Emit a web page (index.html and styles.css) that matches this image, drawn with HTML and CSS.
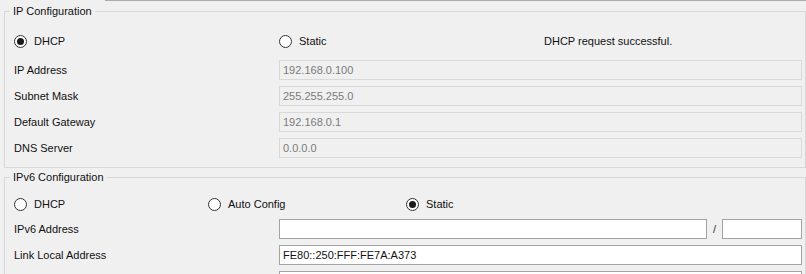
FILE: index.html
```html
<!DOCTYPE html>
<html>
<head>
<meta charset="utf-8">
<link rel="stylesheet" href="styles.css">
</head>
<body>
<div class="topline"></div>
<fieldset class="group g1">
  <legend>IP Configuration</legend>
  <div class="radiorow r4">
    <label class="radio"><span class="dot on"></span>DHCP</label>
    <label class="radio"><span class="dot"></span>Static</label>
    <span class="msg">DHCP request successful.</span>
  </div>
  <div class="field"><span class="lbl">IP Address</span><div class="box dis">192.168.0.100</div></div>
  <div class="field"><span class="lbl">Subnet Mask</span><div class="box dis">255.255.255.0</div></div>
  <div class="field"><span class="lbl">Default Gateway</span><div class="box dis">192.168.0.1</div></div>
  <div class="field last"><span class="lbl">DNS Server</span><div class="box dis">0.0.0.0</div></div>
</fieldset>
<fieldset class="group g2">
  <legend>IPv6 Configuration</legend>
  <div class="radiorow r6">
    <label class="radio"><span class="dot"></span>DHCP</label>
    <label class="radio"><span class="dot"></span>Auto Config</label>
    <label class="radio"><span class="dot on"></span>Static</label>
  </div>
  <div class="field v6"><span class="lbl">IPv6 Address</span><div class="box"></div><span class="slash">/</span><div class="box"></div></div>
  <div class="field"><span class="lbl">Link Local Address</span><div class="box">FE80::250:FFF:FE7A:A373</div></div>
  <div class="field"><span class="lbl"></span><div class="box"></div></div>
</fieldset>
</body>
</html>
```
FILE: styles.css
```css
html, body {
  margin: 0;
  padding: 0;
  background: #f0f0f0;
  font-family: "Liberation Sans", Arial, sans-serif;
  font-size: 11px;
  color: #111;
  overflow: hidden;
}
.topline {
  margin-left: 105px;
  height: 0;
  border-top: 1px solid #acacac;
}
.group {
  box-sizing: border-box;
  width: 802px;
  margin: 4px 0 0 4px;
  padding: 0 3px 9px 9px;
  border: 1px solid #d8d8d8;
  min-width: 0;
}
.g2 {
  margin-top: 3px;
}
.group legend {
  margin-left: -4px;
  padding: 0 3px;
  line-height: 13px;
  height: 13px;
}
.radiorow {
  display: grid;
  height: 20px;
  align-items: center;
}
.r4 {
  grid-template-columns: 265px 265px 1fr;
  margin: 13px 0 9px;
}
.r6 {
  grid-template-columns: 194px 198px 1fr;
  margin: 10px 0 5px;
}
.radio {
  display: flex;
  align-items: center;
  gap: 7px;
}
.dot {
  box-sizing: border-box;
  width: 13px;
  height: 13px;
  border: 1px solid #333;
  border-radius: 50%;
  background: #fff;
  display: flex;
  align-items: center;
  justify-content: center;
}
.dot.on::after {
  content: "";
  width: 7px;
  height: 7px;
  border-radius: 50%;
  background: #1a1a1a;
}
.field {
  display: grid;
  grid-template-columns: 265px 1fr;
  align-items: center;
  height: 20px;
  margin-bottom: 6px;
}
.field.last {
  margin-bottom: 0;
}
.field.v6 {
  grid-template-columns: 265px 1fr 15px 80px;
}
.slash {
  text-align: center;
  color: #333;
}
.box {
  box-sizing: border-box;
  height: 20px;
  line-height: 18px;
  padding-left: 3px;
  border: 1px solid #a3a3a3;
  background: #fff;
  color: #111;
}
.box.dis {
  border-color: #d9d9d9;
  background: #f0f0f0;
  color: #7a7a7a;
}
```
